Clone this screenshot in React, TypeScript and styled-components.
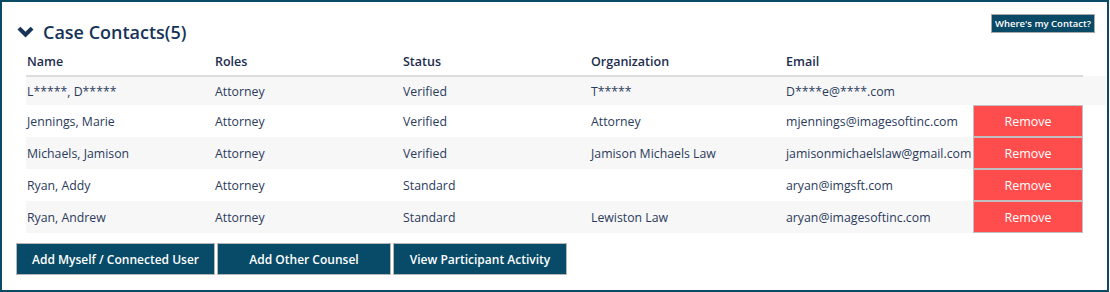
import styled, { createGlobalStyle } from "styled-components";

const GlobalStyle = createGlobalStyle`
    html, body {
        margin: 0;
        padding: 0;
        background: #ffffff;
    }
    body {
        font-family: "Open Sans", "Liberation Sans", sans-serif;
    }
`;

interface Contact {
    name: string;
    role: string;
    status: string;
    org: string;
    email: string;
    removable: boolean;
}

const contacts: Contact[] = [
    { name: "L*****, D*****", role: "Attorney", status: "Verified", org: "T*****", email: "D****e@****.com", removable: false },
    { name: "Jennings, Marie", role: "Attorney", status: "Verified", org: "Attorney", email: "mjennings@imagesoftinc.com", removable: true },
    { name: "Michaels, Jamison", role: "Attorney", status: "Verified", org: "Jamison Michaels Law", email: "jamisonmichaelslaw@gmail.com", removable: true },
    { name: "Ryan, Addy", role: "Attorney", status: "Standard", org: "", email: "aryan@imgsft.com", removable: true },
    { name: "Ryan, Andrew", role: "Attorney", status: "Standard", org: " Lewiston Law", email: "aryan@imagesoftinc.com", removable: true },
];

const App = () => {
    return (
        <>
            <GlobalStyle />
            <Panel>
                <TitleRow>
                    <Title>
                        <svg width="17" height="13" viewBox="0 0 17 13">
                            <path d="M0.5 3.6 L3.4 0.7 L8.5 5.8 L13.6 0.7 L16.5 3.6 L8.5 11.6 Z" fill="#163456" />
                        </svg>
                        Case Contacts(5)
                    </Title>
                    <HelpButton>Where's my Contact?</HelpButton>
                </TitleRow>
                <Table>
                    <colgroup>
                        <col style={{ width: 188 }} />
                        <col style={{ width: 188 }} />
                        <col style={{ width: 188 }} />
                        <col style={{ width: 195 }} />
                        <col style={{ width: 188 }} />
                        <col style={{ width: 110 }} />
                        <col />
                    </colgroup>
                    <thead>
                        <tr>
                            <Th>Name</Th>
                            <Th>Roles</Th>
                            <Th>Status</Th>
                            <Th>Organization</Th>
                            <Th>Email</Th>
                            <Th />
                            <Th $blank />
                        </tr>
                    </thead>
                    <tbody>
                        {contacts.map((c, i) => (
                            <Row key={i} $striped={i % 2 === 0} $full={!c.removable}>
                                <td>{c.name}</td>
                                <td>{c.role}</td>
                                <td>{c.status}</td>
                                <td>{c.org}</td>
                                <td>{c.email}</td>
                                <ActionCell>
                                    {c.removable && <RemoveButton>Remove</RemoveButton>}
                                </ActionCell>
                                <ActionCell />
                            </Row>
                        ))}
                    </tbody>
                </Table>
                <Footer>
                    <ActionButton $width={199}>Add Myself / Connected User</ActionButton>
                    <ActionButton $width={174}>Add Other Counsel</ActionButton>
                    <ActionButton $width={174}>View Participant Activity</ActionButton>
                </Footer>
            </Panel>
        </>
    );
};

export default App;

const Panel = styled.div`
    box-sizing: border-box;
    width: 1109px;
    height: 292px;
    border: 2px solid #0b4a66;
    padding: 12px 0 0 14px;
    color: #2b3b5c;
`;

const TitleRow = styled.div`
    display: flex;
    justify-content: space-between;
    align-items: flex-start;
    padding-right: 12px;
`;

const Title = styled.h2`
    margin: 4px 0 0 1px;
    display: flex;
    align-items: center;
    gap: 9px;
    font-size: 18px;
    font-weight: 600;
    color: #163456;
    line-height: 28px;
`;

const HelpButton = styled.button`
    margin-top: 0;
    height: 19px;
    padding: 0 3px;
    background: #0b4a66;
    color: #ffffff;
    border: 1px solid #a9a9a9;
    font-family: "Open Sans", sans-serif;
    font-size: 9.5px;
    font-weight: 600;
    line-height: 16px;
`;

const Table = styled.table`
    margin: 2px 0 0 10px;
    width: 1080px;
    border-collapse: collapse;
    table-layout: fixed;
    font-size: 12.3px;

    td {
        padding: 0 0 0 1px;
        height: 30px;
        white-space: nowrap;
        overflow: visible;
    }
`;

const Th = styled.th<{ $blank?: boolean }>`
    text-align: left;
    font-size: 12.5px;
    font-weight: 600;
    color: #1d2d4f;
    padding: 0 0 0 1px;
    height: 27px;
    vertical-align: middle;
    border-bottom: 2px solid ${(p) => (p.$blank ? "transparent" : "#dcdcdc")};
`;

const Row = styled.tr<{ $striped: boolean; $full: boolean }>`
    td {
        background: ${(p) => (p.$striped ? "#f7f7f7" : "#ffffff")};
        height: ${(p) => (p.$full ? "28px" : "30px")};
    }
`;

const ActionCell = styled.td`
    && {
        padding: 0;
    }
    tr:not(:first-child) > && {
        background: #ffffff;
    }
`;

const RemoveButton = styled.button`
    display: block;
    width: 110px;
    height: 32px;
    margin: 0;
    background: #ff4d4d;
    color: #ffffff;
    border: 1px solid #c0c0c0;
    font-family: "Open Sans", sans-serif;
    font-size: 12.5px;
`;

const Footer = styled.div`
    display: flex;
    gap: 2px;
    margin-top: 10px;
    padding-left: 0;
`;

const ActionButton = styled.button<{ $width: number }>`
    width: ${(p) => p.$width}px;
    height: 32px;
    background: #074b69;
    color: #ffffff;
    border: 1px solid #b5b5b5;
    font-family: "Open Sans", sans-serif;
    font-size: 12px;
    font-weight: 600;
`;
